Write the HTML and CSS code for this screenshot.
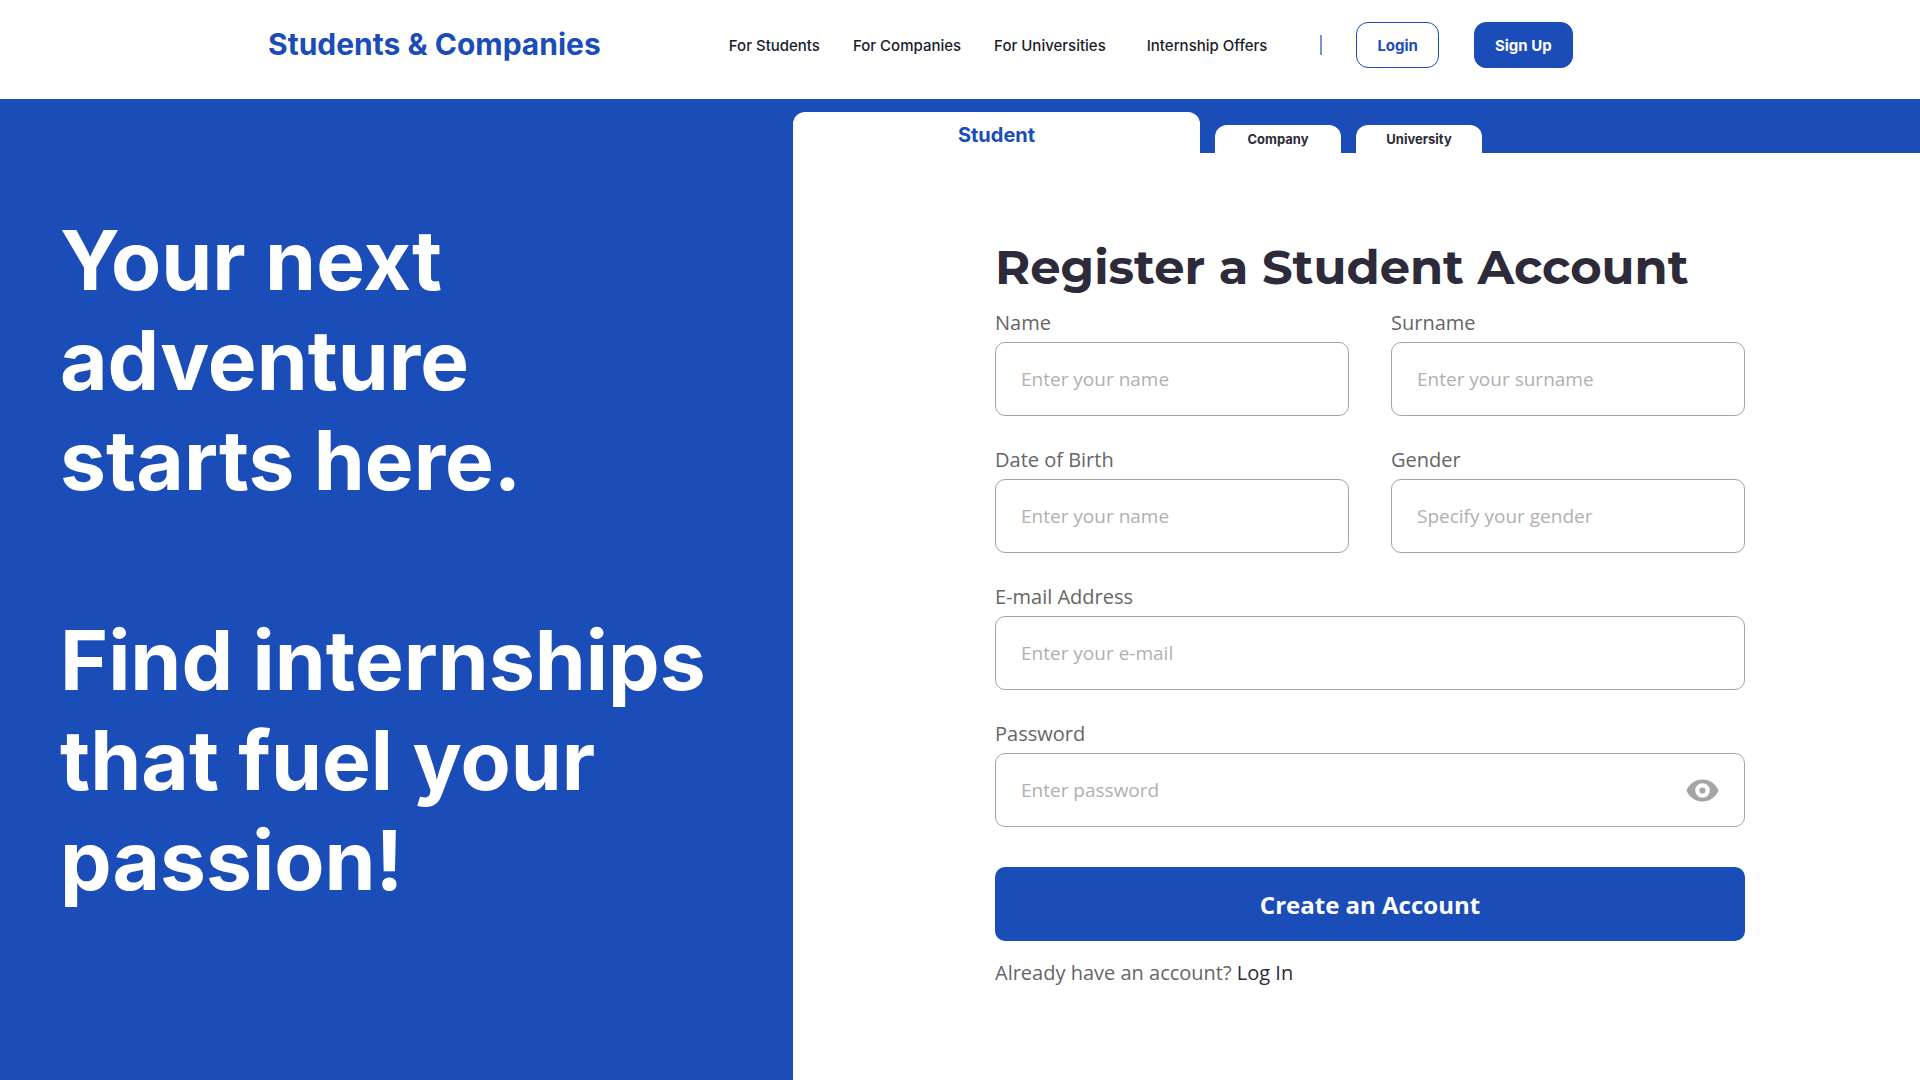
FILE: index.html
```html
<!DOCTYPE html>
<html lang="en">
<head>
  <meta charset="utf-8">
  <meta name="viewport" content="width=device-width, initial-scale=1">
  <title>Students &amp; Companies – Register</title>
  <link rel="stylesheet" href="styles.css">
</head>
<body>
  <header class="site-header">
    <a class="logo" href="#">Students &amp; Companies</a>
    <nav class="site-nav" aria-label="Main">
      <a href="#">For Students</a>
      <a href="#">For Companies</a>
      <a href="#">For Universities</a>
      <a class="nav-offers" href="#">Internship Offers</a>
    </nav>
    <span class="divider"></span>
    <div class="account-actions">
      <button class="btn btn-outline" type="button">Login</button>
      <button class="btn btn-solid" type="button">Sign Up</button>
    </div>
  </header>

  <main class="page">
    <section class="hero">
      <p class="hero-text">Your next adventure<br>starts here.</p>
      <p class="hero-text">Find internships that fuel your passion!</p>
    </section>

    <section class="register">
      <div class="tabs" role="tablist" aria-label="Account type">
        <button class="tab tab-active" type="button" role="tab" aria-selected="true">Student</button>
        <button class="tab" type="button" role="tab" aria-selected="false">Company</button>
        <button class="tab" type="button" role="tab" aria-selected="false">University</button>
      </div>
      <div class="panel">
        <h1 class="title">Register a Student Account</h1>
        <form class="form">
          <div class="field">
            <label for="name">Name</label>
            <input id="name" type="text" placeholder="Enter your name">
          </div>
          <div class="field">
            <label for="surname">Surname</label>
            <input id="surname" type="text" placeholder="Enter your surname">
          </div>
          <div class="field">
            <label for="birth">Date of Birth</label>
            <input id="birth" type="text" placeholder="Enter your name">
          </div>
          <div class="field">
            <label for="gender">Gender</label>
            <input id="gender" type="text" placeholder="Specify your gender">
          </div>
          <div class="field field-wide">
            <label for="email">E-mail Address</label>
            <input id="email" type="email" placeholder="Enter your e-mail">
          </div>
          <div class="field field-wide">
            <label for="password">Password</label>
            <div class="password">
              <input id="password" type="password" placeholder="Enter password">
              <button class="reveal" type="button" aria-label="Show password">
                <svg viewBox="0 0 24 24" width="35" height="35" aria-hidden="true">
                  <path fill="currentColor" fill-rule="evenodd" d="M12 4.5C7 4.5 2.73 7.61 1 12c1.73 4.39 6 7.5 11 7.5s9.27-3.11 11-7.5c-1.73-4.39-6-7.5-11-7.5zM12 17a5 5 0 1 1 0-10 5 5 0 0 1 0 10z"/>
                  <circle cx="12" cy="12" r="2.1" fill="currentColor"/>
                </svg>
              </button>
            </div>
          </div>
          <button class="submit" type="submit">Create an Account</button>
        </form>
        <p class="login-hint">Already have an account? <a href="#">Log In</a></p>
      </div>
    </section>
  </main>
</body>
</html>
```
FILE: styles.css
```css
:root {
  --blue: #1b4db8;
  --ink: #2d2b3a;
  --muted: #666666;
  --line: #a5a5a5;
}

* {
  box-sizing: border-box;
}

body {
  margin: 0;
  background: #fff;
  color: var(--ink);
  font-family: Inter, "Liberation Sans", sans-serif;
}

button {
  font-family: inherit;
  cursor: pointer;
}

a {
  color: inherit;
  text-decoration: none;
}

/* Header */

.site-header {
  display: flex;
  align-items: center;
  min-height: 99px;
  padding: 0 24px 9px 268px;
}

.logo {
  padding-bottom: 2px;
  color: var(--blue);
  font-size: 30px;
  font-weight: 700;
  line-height: 36px;
  white-space: nowrap;
}

.site-nav {
  display: flex;
  gap: 33px;
  margin-left: 128px;
  padding-top: 2px;
  color: #191d2b;
  font-size: 15px;
  font-weight: 500;
  line-height: 20px;
  white-space: nowrap;
}

.nav-offers {
  margin-left: 8px;
}

.divider {
  width: 2px;
  height: 20px;
  margin: 0 34px 0 53px;
  background: #7396db;
}

.account-actions {
  display: flex;
  gap: 35px;
}

.btn {
  height: 46px;
  padding: 0 20px;
  border: 1px solid var(--blue);
  border-radius: 12px;
  font-size: 15px;
  font-weight: 700;
  white-space: nowrap;
}

.btn-outline {
  background: #fff;
  color: var(--blue);
}

.btn-solid {
  background: var(--blue);
  color: #fff;
}

/* Page */

.page {
  display: grid;
  grid-template-columns: 793fr 1127fr;
  min-height: calc(100vh - 99px);
}

.hero {
  padding: 112px 60px 64px;
  background: var(--blue);
  color: #fff;
}

.hero-text {
  margin: 0 0 100px;
  font-size: 82px;
  font-weight: 700;
  line-height: 100px;
}

.hero-text:last-child {
  margin-bottom: 0;
}

.register {
  display: flex;
  flex-direction: column;
}

.tabs {
  display: flex;
  align-items: flex-end;
  gap: 15px;
  height: 54px;
  background: var(--blue);
}

.tab {
  width: 126px;
  height: 28px;
  padding: 0;
  border: 0;
  border-radius: 12px 12px 0 0;
  background: #fff;
  color: var(--ink);
  font-size: 13px;
  font-weight: 700;
}

.tab-active {
  width: 407px;
  height: 41px;
  padding-top: 4px;
  color: var(--blue);
  font-size: 20px;
}

.panel {
  padding: 85px 175px 64px 202px;
  font-family: "Open Sans", "Noto Sans", sans-serif;
}

.title {
  margin: 0 0 12px;
  font-family: Montserrat, Inter, sans-serif;
  font-size: 48px;
  font-weight: 700;
  line-height: 59px;
  white-space: nowrap;
}

.form {
  display: grid;
  grid-template-columns: 1fr 1fr;
  gap: 30px 42px;
}

.field {
  display: flex;
  flex-direction: column;
  gap: 6px;
  min-width: 0;
}

.field-wide,
.submit {
  grid-column: 1 / -1;
}

.field label,
.login-hint {
  color: var(--muted);
  font-size: 20px;
  line-height: 27px;
}

.field input {
  width: 100%;
  height: 74px;
  padding: 0 25px;
  border: 1px solid var(--line);
  border-radius: 10px;
  background: #fff;
  color: var(--ink);
  font-family: inherit;
  font-size: 19px;
}

.field input::placeholder {
  color: #b0b0b0;
  opacity: 1;
}

.password {
  position: relative;
}

.reveal {
  position: absolute;
  inset: 0 25px 0 auto;
  display: flex;
  align-items: center;
  padding: 0;
  border: 0;
  background: none;
  color: var(--line);
}

.submit {
  height: 74px;
  margin-top: 10px;
  border: 0;
  border-radius: 10px;
  background: var(--blue);
  color: #fff;
  font-size: 24px;
  font-weight: 700;
  font-family: inherit;
}

.login-hint {
  margin: 18px 0 0;
}

.login-hint a {
  color: var(--ink);
}

@media (max-width: 1600px) {
  .site-header {
    flex-wrap: wrap;
    gap: 16px;
    padding: 16px 24px;
  }

  .site-nav,
  .divider {
    margin-left: 16px;
  }

  .panel {
    padding: 64px 48px;
  }

  .title {
    font-size: 40px;
    white-space: normal;
  }
}

@media (max-width: 1200px) {
  .page {
    grid-template-columns: 1fr;
  }

  .tab-active {
    flex: 1;
  }
}
```
